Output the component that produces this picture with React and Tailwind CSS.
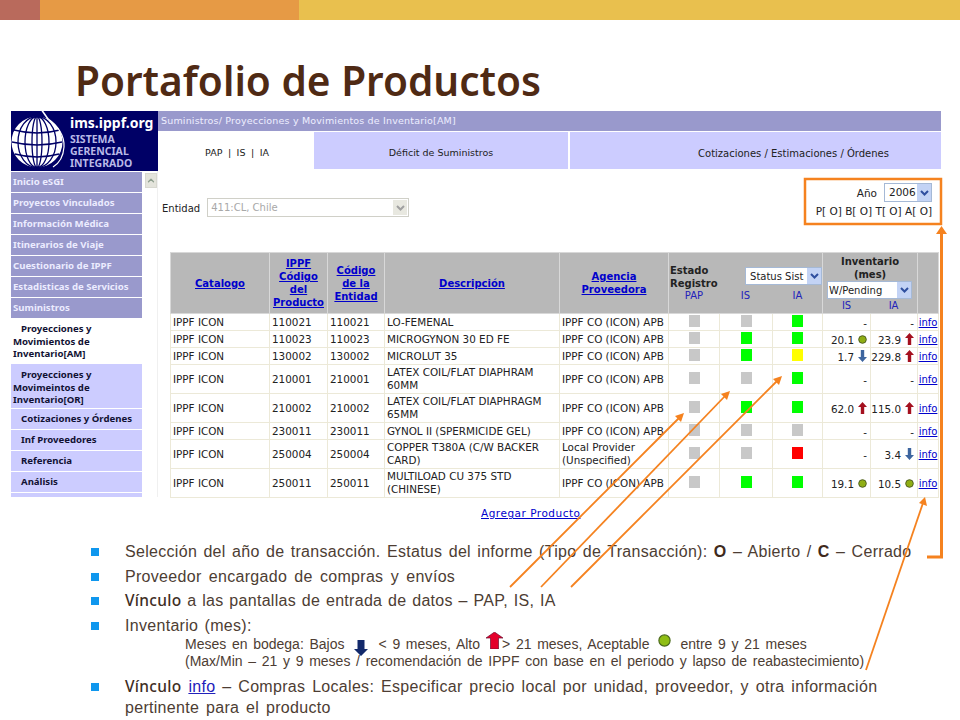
import { ChevronUp } from 'lucide-react';

const sans = "font-['DejaVu_Sans',sans-serif]";

const menuTop = ['Inicio eSGI', 'Proyectos Vinculados', 'Información Médica', 'Itinerarios de Viaje', 'Cuestionario de IPPF', 'Estadisticas de Servicios', 'Suministros'];
const menuSub = ['Cotizaciones y Órdenes', 'Inf Proveedores', 'Referencia', 'Análisis'];

const G = 'bg-[#c8c8c8]';
const rows = [
  { h: 'h-[17px]', id: '110021', desc: 'LO-FEMENAL', st: ['g', 'g', 'l'], is: ['-'], ia: ['-'] },
  { h: 'h-[17px]', id: '110023', desc: 'MICROGYNON 30 ED FE', st: ['g', 'l', 'l'], is: ['20.1', 'ok'], ia: ['23.9', 'up'] },
  { h: 'h-[17px]', id: '130002', desc: 'MICROLUT 35', st: ['g', 'l', 'y'], is: ['1.7', 'down'], ia: ['229.8', 'up'] },
  { h: 'h-[29px]', id: '210001', desc: 'LATEX COIL/FLAT DIAPHRAM 60MM', st: ['g', 'g', 'l'], is: ['-'], ia: ['-'] },
  { h: 'h-[29px]', id: '210002', desc: 'LATEX COIL/FLAT DIAPHRAGM 65MM', st: ['g', 'l', 'l'], is: ['62.0', 'up'], ia: ['115.0', 'up'] },
  { h: 'h-[17px]', id: '230011', desc: 'GYNOL II (SPERMICIDE GEL)', st: ['g', 'g', 'g'], is: ['-'], ia: ['-'] },
  { h: 'h-[29px]', id: '250004', desc: 'COPPER T380A (C/W BACKER CARD)', agency: 'Local Provider (Unspecified)', st: ['g', 'g', 'r'], is: ['-'], ia: ['3.4', 'down'] },
  { h: 'h-[29px]', id: '250011', desc: 'MULTILOAD CU 375 STD (CHINESE)', st: ['g', 'l', 'l'], is: ['19.1', 'ok'], ia: ['10.5', 'ok'] },
];

const squareColor = { g: G, l: 'bg-[#00ff00]', y: 'bg-[#ffff00]', r: 'bg-[#ff0000]' };

const Chevron = () => (
  <svg width="9" height="6" viewBox="0 0 9 6" fill="none" stroke="#2f4f9f" strokeWidth="2"><path d="M1 1l3.5 3.5L8 1" /></svg>
);

const ArrowUp = () => (
  <svg width="9" height="12" viewBox="0 0 9 12"><path d="M4.5 0L9 5H6.2V12H2.8V5H0Z" fill="#a4101f" /></svg>
);
const ArrowDown = () => (
  <svg width="9" height="12" viewBox="0 0 9 12"><path d="M2.8 0H6.2V7H9L4.5 12L0 7H2.8Z" fill="#3d659f" /></svg>
);
const Dot = () => (
  <svg width="9" height="9" viewBox="0 0 9 9"><circle cx="4.5" cy="4.5" r="3.8" fill="#8fae14" stroke="#4f5f20" strokeWidth="1" /></svg>
);

const StockIcon = ({ kind }) => {
  if (kind === 'up') return <ArrowUp />;
  if (kind === 'down') return <ArrowDown />;
  if (kind === 'ok') return <Dot />;
  return null;
};

const Stock = ({ value }) => (
  <td className="border border-[#ece9d8] p-0 text-right">
    <div className="flex items-center justify-end gap-[4px] pr-[3px]">
      <span className="mt-[3px]">{value[0]}</span>
      {value[1] && <StockIcon kind={value[1]} />}
    </div>
  </td>
);

const HeadLink = ({ children }) => (
  <a href="#" className="font-bold text-[#0000cc] underline">{children}</a>
);

const Globe = () => (
  <svg width="55" height="60" viewBox="0 0 55 60" className="shrink-0">
    <circle cx="26" cy="31" r="25.5" fill="#fff" />
    <g fill="none" stroke="#000066" strokeWidth="1.3">
      <ellipse cx="26" cy="31" rx="5" ry="25.5" />
      <ellipse cx="26" cy="31" rx="12" ry="25.5" />
      <ellipse cx="26" cy="31" rx="19" ry="25.5" />
      <path d="M26 5v52" />
      <path d="M3 19Q26 25 49 19M1 31Q26 37 51 31M4 43Q26 49 48 43" />
    </g>
    <path d="M30 -2L37 8" stroke="#fff" strokeWidth="1.6" fill="none" />
    <path d="M36 7Q54 20 53 36Q52 50 42 56" stroke="#fff" strokeWidth="1.2" fill="none" />
  </svg>
);

const Sidebar = () => (
  <aside className="w-[147px] shrink-0 font-['Noto_Sans',sans-serif] text-[9.6px] font-bold">
    <div className="flex h-[60px] bg-[#000066]">
      <Globe />
      <div className="pl-[4px] pt-[2px]">
        <div className="text-[14px] leading-[19px] text-white">ims.ippf.org</div>
        <div className="mt-[1px] text-[10.5px] leading-[12px] text-[#b9b9e6]">SISTEMA<br />GERENCIAL<br />INTEGRADO</div>
      </div>
    </div>
    <div className="flex">
      <div className="w-[131px] shrink-0">
        {menuTop.map((m) => (
          <div key={m} className="mt-px flex h-[20px] items-center whitespace-nowrap bg-[#9999cc] pl-[2px] text-[#ececff]">{m}</div>
        ))}
        <div className="h-[46px] pl-[2px] pt-[5px] leading-[12.5px] text-[#111133]">
          <span className="pl-[8px]">Proyecciones y</span><br />Movimientos de<br />Inventario[AM]
        </div>
        <div className="h-[44px] bg-[#ccccff] pl-[2px] pt-[5px] leading-[12.5px] text-[#111133]">
          <span className="pl-[8px]">Proyecciones y</span><br />Movimeintos de<br />Inventario[OR]
        </div>
        {menuSub.map((m) => (
          <div key={m} className="mt-px flex h-[20px] items-center whitespace-nowrap bg-[#ccccff] pl-[10px] text-[#111133]">{m}</div>
        ))}
        <div className="mt-px h-[4px] bg-[#ccccff]" />
      </div>
      <div className="flex-1 border-r border-[#f0f0f0] pl-[3px] pt-[2px]">
        <div className="flex h-[15px] w-[12px] items-center justify-center border border-[#d8d8d0] bg-[#e4e4dc]">
          <ChevronUp size={11} strokeWidth={3} color="#8f9f8f" />
        </div>
      </div>
    </div>
  </aside>
);

const Header = () => (
  <thead>
    <tr className="h-[61px] bg-[#b8b8b8] text-[10px] leading-[13px]">
      <th className="border border-[#d8d8d8] p-0 font-bold"><HeadLink>Catalogo</HeadLink></th>
      <th className="border border-[#d8d8d8] p-0"><HeadLink>IPPF<br />Código<br />del<br />Producto</HeadLink></th>
      <th className="border border-[#d8d8d8] p-0"><HeadLink>Código<br />de la<br />Entidad</HeadLink></th>
      <th className="border border-[#d8d8d8] p-0"><HeadLink>Descripción</HeadLink></th>
      <th className="border border-[#d8d8d8] p-0"><HeadLink>Agencia<br />Proveedora</HeadLink></th>
      <th colSpan={3} className="border border-[#d8d8d8] p-0 align-top">
        <div className="flex items-start justify-between pt-[11px] text-left">
          <div className="pl-[1px] leading-[13px] font-bold text-[#222]">Estado<br />Registro</div>
          <div className="mt-[3px] flex h-[18px] w-[77px] items-center justify-between border border-[#a5b9d6] bg-white pl-[4px] font-normal text-[#222]">
            Status Sist
            <span className="flex h-full w-[14px] items-center justify-center bg-[#c3d3f5]"><Chevron /></span>
          </div>
        </div>
        <div className="grid grid-cols-[50px_53px_51px] text-center leading-[12px] font-normal text-[#2222bb]">
          <span>PAP</span>
          <span>IS</span>
          <span>IA</span>
        </div>
      </th>
      <th colSpan={2} className="border border-[#d8d8d8] p-0 align-top">
        <div className="pt-[2px] leading-[13px] font-bold text-[#222]">Inventario<br />(mes)</div>
        <div className="ml-[4px] flex h-[18px] w-[85px] items-center justify-between border border-[#a5b9d6] bg-white pl-[1px] text-left font-normal text-[#222]">
          W/Pending
          <span className="flex h-full w-[14px] items-center justify-center bg-[#c3d3f5]"><Chevron /></span>
        </div>
        <div className="grid grid-cols-2 pt-[1px] text-center leading-[12px] font-normal text-[#2222bb]">
          <span>IS</span>
          <span>IA</span>
        </div>
      </th>
      <th className="border border-[#d8d8d8] p-0" />
    </tr>
  </thead>
);

const cell = 'border border-[#ece9d8] px-[2px] py-0';

const InventoryTable = () => (
  <table className={`ml-[12px] w-[768px] table-fixed border-collapse ${sans} text-[10.4px] leading-[13px] text-[#222]`}>
    <colgroup>
      <col className="w-[99px]" />
      <col className="w-[58px]" />
      <col className="w-[57px]" />
      <col className="w-[175px]" />
      <col className="w-[109px]" />
      <col className="w-[51px]" />
      <col className="w-[53px]" />
      <col className="w-[50px]" />
      <col className="w-[48px]" />
      <col className="w-[47px]" />
      <col className="w-[21px]" />
    </colgroup>
    <Header />
    <tbody>
      {rows.map((r) => (
        <tr key={r.id} className={r.h}>
          <td className={cell}>IPPF ICON</td>
          <td className={cell}>{r.id}</td>
          <td className={cell}>{r.id}</td>
          <td className={cell}>{r.desc}</td>
          <td className={cell}>{r.agency || 'IPPF CO (ICON) APB'}</td>
          {r.st.map((s, i) => (
            <td key={i} className="border border-[#ece9d8] p-0">
              <div className={`mx-auto mb-[2px] h-[12px] w-[11px] ${squareColor[s]}`} />
            </td>
          ))}
          <Stock value={r.is} />
          <Stock value={r.ia} />
          <td className="border border-[#ece9d8] p-0 text-center text-[10px]"><a href="#" className="text-[#0000cc] underline">info</a></td>
        </tr>
      ))}
    </tbody>
  </table>
);

const Main = () => (
  <main className={`min-w-0 flex-1 ${sans} text-[10px] text-[#222]`}>
    <div className="flex h-[20px] items-center bg-[#9999cc] pl-[3px] text-[9.5px] tracking-[0.18px] text-[#eeeeff]">Suministros/ Proyecciones y Movimientos de Inventario[AM]</div>
    <div className="mt-px flex h-[37px] text-center text-[9.5px]">
      <div className="flex w-[156px] items-center justify-center pt-[6px] pl-[2px] [word-spacing:2.5px]">PAP | IS | IA</div>
      <div className="flex w-[254px] items-center justify-center bg-[#ccccff] pt-[6px]">Déficit de Suministros</div>
      <div className="ml-[2px] flex flex-1 items-center justify-center bg-[#ccccff] pt-[6px] pl-[76px] text-[10px]">Cotizaciones / Estimaciones / Órdenes</div>
    </div>
    <div className="flex h-[83px] items-start justify-between">
      <div className="mt-[29px] flex items-center gap-[7px] pl-[4px]">
        <span className="pt-[2px]">Entidad</span>
        <div className="flex h-[19px] w-[202px] items-center justify-between border border-[#d0d0c8] bg-white pl-[3px] text-[#a8a8a8]">
          411:CL, Chile
          <span className="mr-px flex h-[15px] w-[14px] items-center justify-center bg-[#e8e8e0]"><svg width="9" height="6" viewBox="0 0 9 6" fill="none" stroke="#a0a0a0" strokeWidth="2"><path d="M1 1l3.5 3.5L8 1" /></svg></span>
        </div>
      </div>
      <div className="mt-[14px] mr-[9px] text-right text-[10.5px]">
        <div className="flex items-center justify-end gap-[7px]">
          <span className="pt-[3px]">Año</span>
          <div className="flex h-[19px] w-[48px] items-center justify-between border border-[#a5b9d6] bg-white pl-[4px]">
            2006
            <span className="flex h-full w-[14px] items-center justify-center bg-[#c3d3f5]"><Chevron /></span>
          </div>
        </div>
        <div className="mt-[2px] leading-[14px]">P[ O] B[ O] T[ O] A[ O]</div>
      </div>
    </div>
    <InventoryTable />
    <a href="#" className="mt-[9px] ml-[323px] block text-[10.5px] leading-[13px] tracking-[0.5px] text-[#0000cc] underline">Agregar Producto</a>
  </main>
);

const Bullet = ({ children, className }) => (
  <li className={`flex ${className}`}>
    <span className="mt-[7px] mr-[26px] h-[8px] w-[8px] shrink-0 bg-[#0f97ee]" />
    <div className="min-w-0 flex-1 whitespace-nowrap">{children}</div>
  </li>
);

const Vinculo = () => <span className="font-['Noto_Sans',sans-serif] text-[15.5px] leading-[21px] font-medium text-[#3f2e24]">Vínculo</span>;

const Notes = () => (
  <ul className="mt-[21px] ml-[91px] w-[830px] font-['Liberation_Sans',sans-serif] text-[16px] leading-[21px] tracking-[0.3px] text-[#4d3d33] [word-spacing:1.6px]">
    <Bullet className="h-[24.5px]">Selección del año de transacción. Estatus del informe (Tipo de Transacción): <b className="text-[#3f2a1c]">O</b> – Abierto / <b className="text-[#3f2a1c]">C</b> – Cerrado</Bullet>
    <Bullet className="h-[24.5px] [word-spacing:2.5px]">Proveedor encargado de compras y envíos</Bullet>
    <Bullet className="h-[24.5px] [word-spacing:1px]"><Vinculo /> a las pantallas de entrada de datos – PAP, IS, IA</Bullet>
    <Bullet className="h-[61px]">
      Inventario (mes):
      <div className="ml-[60px] text-[14px] leading-[17px] tracking-normal [word-spacing:1.8px]">
        <div className="flex h-[17px] items-center">
          <span>Meses en bodega: Bajos</span>
          <svg width="14" height="16" viewBox="0 0 14 16" className="mr-[11px] ml-[9px] shrink-0 translate-y-[4px]"><path d="M3.5 0H10.5V9H14L7 16L0 9H3.5Z" fill="#12296b" /></svg>
          <span>{'< 9 meses, Alto'}</span>
          <svg width="17" height="17" viewBox="0 0 17 17" className="mr-[-1px] ml-[6px] shrink-0 -translate-y-[4px]"><path d="M8.5 0L17 6H12.5V17H4.5V6H0Z" fill="#e4002b" stroke="#6b1030" strokeWidth="0.7" /></svg>
          <span>{'> 21 meses, Aceptable'}</span>
          <svg width="13" height="13" viewBox="0 0 13 13" className="mx-[9px] shrink-0 -translate-y-[4px]"><circle cx="6.5" cy="6.5" r="5.6" fill="#8fbe14" stroke="#4b6a1c" strokeWidth="1.2" /></svg>
          <span>entre 9 y 21 meses</span>
        </div>
        <div className="h-[17px]">(Max/Min – 21 y 9 meses / recomendación de IPPF con base en el periodo y lapso de reabastecimiento)</div>
      </div>
    </Bullet>
    <Bullet className="[word-spacing:2.1px]">
      <Vinculo /> <a href="#" className="text-[#2222bb] underline">info</a> – Compras Locales: Especificar precio local por unidad, proveedor, y otra información<br />pertinente para el producto
    </Bullet>
  </ul>
);

const Annotations = () => (
  <svg width="960" height="720" viewBox="0 0 960 720" className="pointer-events-none absolute inset-0" fill="none">
    <g stroke="#f5821f">
      <rect x="805" y="179" width="136" height="45" strokeWidth="2.5" />
      <path d="M927 557H941.5V232" strokeWidth="3" />
      <g strokeWidth="1.8">
        <path d="M510 587L680 417" />
        <path d="M541 587L726 395" />
        <path d="M571 587L778 380" />
        <path d="M866 670L923 503" />
      </g>
    </g>
    <g fill="#f5821f">
      <path d="M936 234L941.5 226L947 234Z" />
      <path d="M684 413L681 422L675 416Z" />
      <path d="M730 391L727 400L721 394Z" />
      <path d="M782 376L779 385L773 379Z" />
      <path d="M925 497L927 506L919 503Z" />
    </g>
  </svg>
);

export default function App() {
  return (
    <div className="relative h-[720px] w-[960px] overflow-hidden bg-white">
      <div className="flex h-[20px]">
        <div className="w-[40px] bg-[#b96a5c]" />
        <div className="w-[259px] bg-[#e69a45]" />
        <div className="flex-1 bg-[#e9c04e]" />
      </div>
      <h1 className="flex h-[91px] items-end pb-[6px] pl-[75px] font-['Noto_Sans',sans-serif] text-[40.6px] leading-[48px] font-semibold text-[#4f2a14]">Portafolio de Productos</h1>
      <div className="ml-[11px] flex w-[930px] items-start">
        <Sidebar />
        <Main />
      </div>
      <Notes />
      <Annotations />
    </div>
  );
}
